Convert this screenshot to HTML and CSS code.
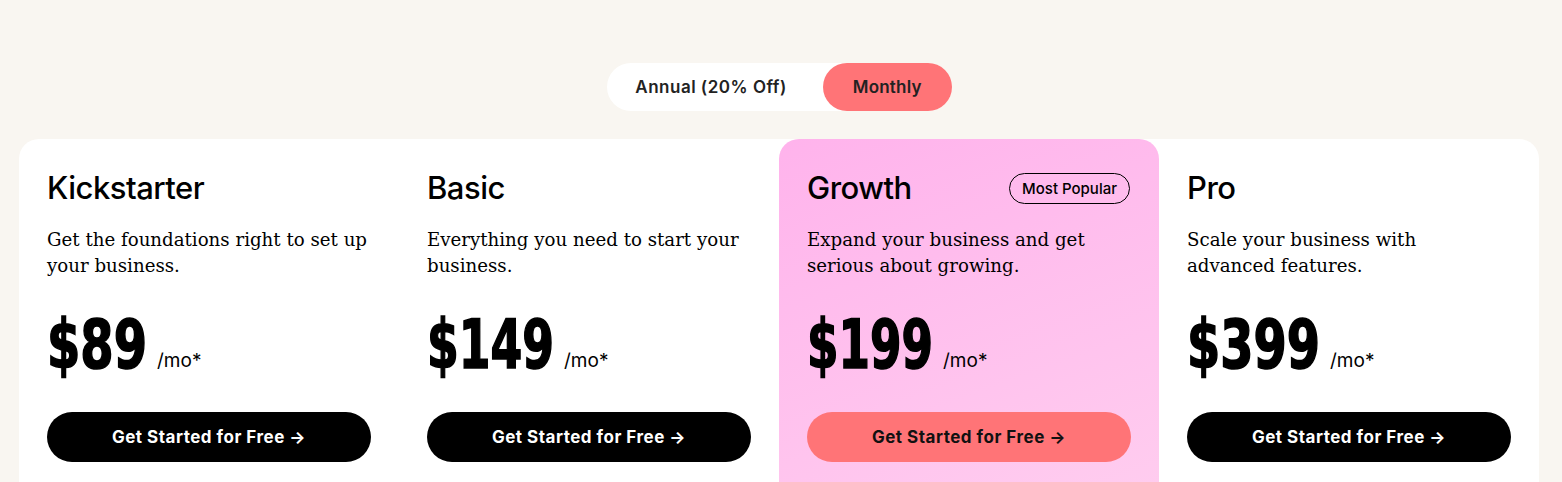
FILE: index.html
```html
<!DOCTYPE html>
<html lang="en">
<head>
<meta charset="utf-8">
<title>Pricing</title>
<link rel="stylesheet" href="styles.css">
</head>
<body>
<main class="pricing">
  <div class="toggle">
    <button class="toggle-opt">Annual (20% Off)</button>
    <button class="toggle-opt active">Monthly</button>
  </div>
  <section class="plans">
    <article class="plan">
      <div class="plan-head"><h2 class="plan-name">Kickstarter</h2></div>
      <p class="plan-desc">Get the foundations right to set up your business.</p>
      <div class="price">
        <svg class="amount" width="100" height="64" viewBox="0 0 100 64"><text x="0" y="58" textLength="100" lengthAdjust="spacingAndGlyphs">$89</text></svg>
        <span class="per">/mo*</span>
      </div>
      <a class="cta" href="#">Get Started for Free →</a>
    </article>
    <article class="plan">
      <div class="plan-head"><h2 class="plan-name">Basic</h2></div>
      <p class="plan-desc">Everything you need to start your business.</p>
      <div class="price">
        <svg class="amount" width="127" height="64" viewBox="0 0 127 64"><text x="0" y="58" textLength="127" lengthAdjust="spacingAndGlyphs">$149</text></svg>
        <span class="per">/mo*</span>
      </div>
      <a class="cta" href="#">Get Started for Free →</a>
    </article>
    <article class="plan featured">
      <div class="plan-head"><h2 class="plan-name">Growth</h2><span class="badge">Most Popular</span></div>
      <p class="plan-desc">Expand your business and get serious about growing.</p>
      <div class="price">
        <svg class="amount" width="126" height="64" viewBox="0 0 126 64"><text x="0" y="58" textLength="126" lengthAdjust="spacingAndGlyphs">$199</text></svg>
        <span class="per">/mo*</span>
      </div>
      <a class="cta" href="#">Get Started for Free →</a>
    </article>
    <article class="plan">
      <div class="plan-head"><h2 class="plan-name">Pro</h2></div>
      <p class="plan-desc">Scale your business with advanced features.</p>
      <div class="price">
        <svg class="amount" width="133" height="64" viewBox="0 0 133 64"><text x="0" y="58" textLength="133" lengthAdjust="spacingAndGlyphs">$399</text></svg>
        <span class="per">/mo*</span>
      </div>
      <a class="cta" href="#">Get Started for Free →</a>
    </article>
  </section>
</main>
</body>
</html>
```
FILE: styles.css
```css
* { box-sizing: border-box; }
html, body { margin: 0; padding: 0; }
body {
  background: #f9f6f1;
  font-family: Inter, "Noto Sans", sans-serif;
  color: #000;
  height: 482px;
  overflow: hidden;
}
.pricing {
  display: flex;
  flex-direction: column;
  align-items: center;
  padding: 63px 0 0;
}
.toggle {
  display: flex;
  background: #fff;
  border-radius: 24px;
  height: 48px;
  margin-left: -3px;
}
.toggle-opt {
  border: 0;
  background: transparent;
  font-family: Inter, sans-serif;
  font-weight: 600;
  font-size: 17px;
  letter-spacing: 0.5px;
  color: #222;
  border-radius: 24px;
  height: 48px;
  cursor: pointer;
}
.toggle-opt:first-child { padding: 0 36px 0 28px; }
.toggle-opt.active { background: #ff7477; padding: 0 30px; letter-spacing: 0.2px; }
.plans {
  margin-top: 28px;
  margin-right: 4px;
  width: 1520px;
  display: grid;
  grid-template-columns: repeat(4, 1fr);
  background: #fff;
  border-radius: 20px 20px 0 0;
}
.plan {
  padding: 32px 28px 40px;
  display: flex;
  flex-direction: column;
}
.plan.featured {
  background: linear-gradient(160deg, #ffb3ec 0%, #ffcdef 100%);
  border-radius: 20px 20px 0 0;
}
.plan-head {
  display: flex;
  justify-content: space-between;
  align-items: center;
  height: 34px;
}
.plan-name {
  margin: 0;
  font-size: 31px;
  font-weight: 500;
  letter-spacing: -0.5px;
  line-height: 34px;
}
.badge {
  border: 1px solid #000;
  border-radius: 16px;
  font-size: 15px;
  font-weight: 500;
  padding: 0 12px;
  height: 31px;
  line-height: 29px;
  margin-right: 1px;
}
.plan-desc {
  margin: 22px 0 0;
  max-width: 321px;
  font-family: "DejaVu Serif", "Liberation Serif", serif;
  font-size: 18.2px;
  line-height: 26px;
  height: 52px;
}
.price {
  margin-top: 31px;
  display: flex;
  align-items: flex-end;
  height: 64px;
}
.amount {
  display: block;
  overflow: visible;
  font-family: "DejaVu Sans Condensed", "DejaVu Sans", sans-serif;
  font-weight: 700;
  font-size: 67px;
  fill: #000;
  stroke: #000;
  stroke-width: 1.6px;
}
.per {
  font-size: 19px;
  line-height: 19px;
  margin: 0 0 4px 10px;
}
.cta {
  margin-top: 38px;
  display: flex;
  align-items: center;
  justify-content: center;
  height: 50px;
  border-radius: 25px;
  background: #000;
  color: #fff;
  font-weight: 700;
  font-size: 17px;
  text-decoration: none;
  letter-spacing: 0.5px;
}
.featured .cta { background: #ff7477; color: #111; }
```
